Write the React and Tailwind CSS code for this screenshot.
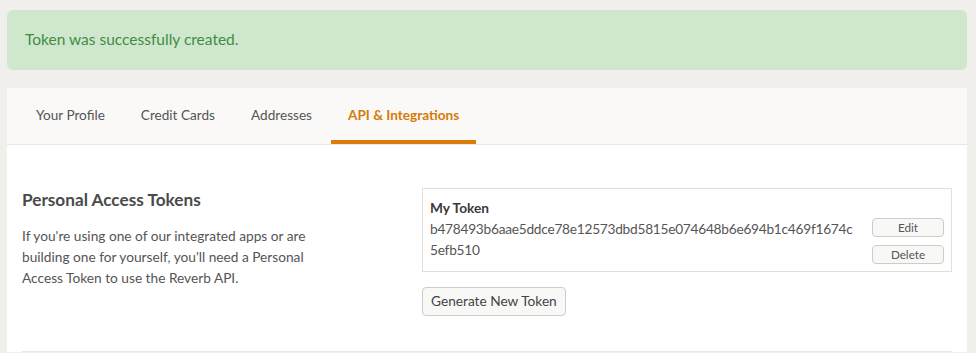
import React from 'react';

const tabs = ['Your Profile', 'Credit Cards', 'Addresses', 'API & Integrations'];

const App = () => {
    const active = 'API & Integrations';

    return (
        <div className="min-h-[353px] bg-[#f0efeb] pt-[10px] pl-[7px] pr-[9px] overflow-hidden" style={{ fontFamily: 'Lato, "Liberation Sans", sans-serif' }}>
            {/* flash message */}
            <div className="h-[60px] rounded-[6px] bg-[#cfe7cd] flex items-center px-[18px] text-[15.5px] text-[#3f8d3f]">
                Token was successfully created.
            </div>

            <div className="mt-[18px] bg-white">
                {/* tabs */}
                <div className="h-[57px] bg-[#faf9f7] border-b border-[#e9e7e2] flex pl-[12px] gap-[2px]">
                    {tabs.map((tab) => (
                        <div
                            key={tab}
                            className={
                                tab === active
                                    ? 'h-full flex items-center px-[17px] text-[13.6px] font-bold text-[#d57b08] border-b-[4px] border-[#d97c0a] pt-[2px]'
                                    : 'h-full flex items-center px-[17px] text-[13.6px] text-[#555] border-b-[4px] border-transparent pt-[2px]'
                            }
                        >
                            {tab}
                        </div>
                    ))}
                </div>

                {/* content */}
                <div className="grid grid-cols-[400px_1fr] pt-[43px]">
                    <div className="px-[15px]">
                        <h2 className="text-[17.2px] font-bold text-[#4a4a4a] leading-[24px]">Personal Access Tokens</h2>
                        <p className="mt-[13px] w-[300px] text-[13.7px] leading-[21px] text-[#555]">
                            If you're using one of our integrated apps or are building one for yourself, you'll need a Personal Access Token to use the Reverb API.
                        </p>
                    </div>

                    <div className="px-[15px]">
                        <div className="border border-[#e2e0db] flex pl-[7px] pr-[7px] pt-[9px] pb-[7px]">
                            <div className="flex-1 min-w-0">
                                <div className="text-[13.7px] font-bold text-[#3a3a3a] leading-[20px]">My Token</div>
                                <div className="w-[426px] break-all text-[13.7px] tracking-[-0.25px] text-[#555] leading-[21px]">
                                    b478493b6aae5ddce78e12573dbd5815e074648b6e694b1c469f1674c5efb510
                                </div>
                            </div>
                            <div className="flex flex-col gap-[8px] pt-[20px] shrink-0">
                                <button className="w-[72px] h-[19px] rounded-[4px] border border-[#cfcdc8] bg-[#f8f8f7] text-[11.7px] text-[#555] leading-none">Edit</button>
                                <button className="w-[72px] h-[19px] rounded-[4px] border border-[#cfcdc8] bg-[#f8f8f7] text-[11.7px] text-[#555] leading-none">Delete</button>
                            </div>
                        </div>
                        <button className="mt-[15px] h-[29px] px-[8px] rounded-[4px] border border-[#cfcdc8] bg-[#f8f8f7] text-[13.7px] text-[#444]">
                            Generate New Token
                        </button>
                    </div>
                </div>

                <div className="mx-[15px] mt-[35px] border-t border-[#e9e7e2]"></div>
            </div>
        </div>
    );
};

export default App;
